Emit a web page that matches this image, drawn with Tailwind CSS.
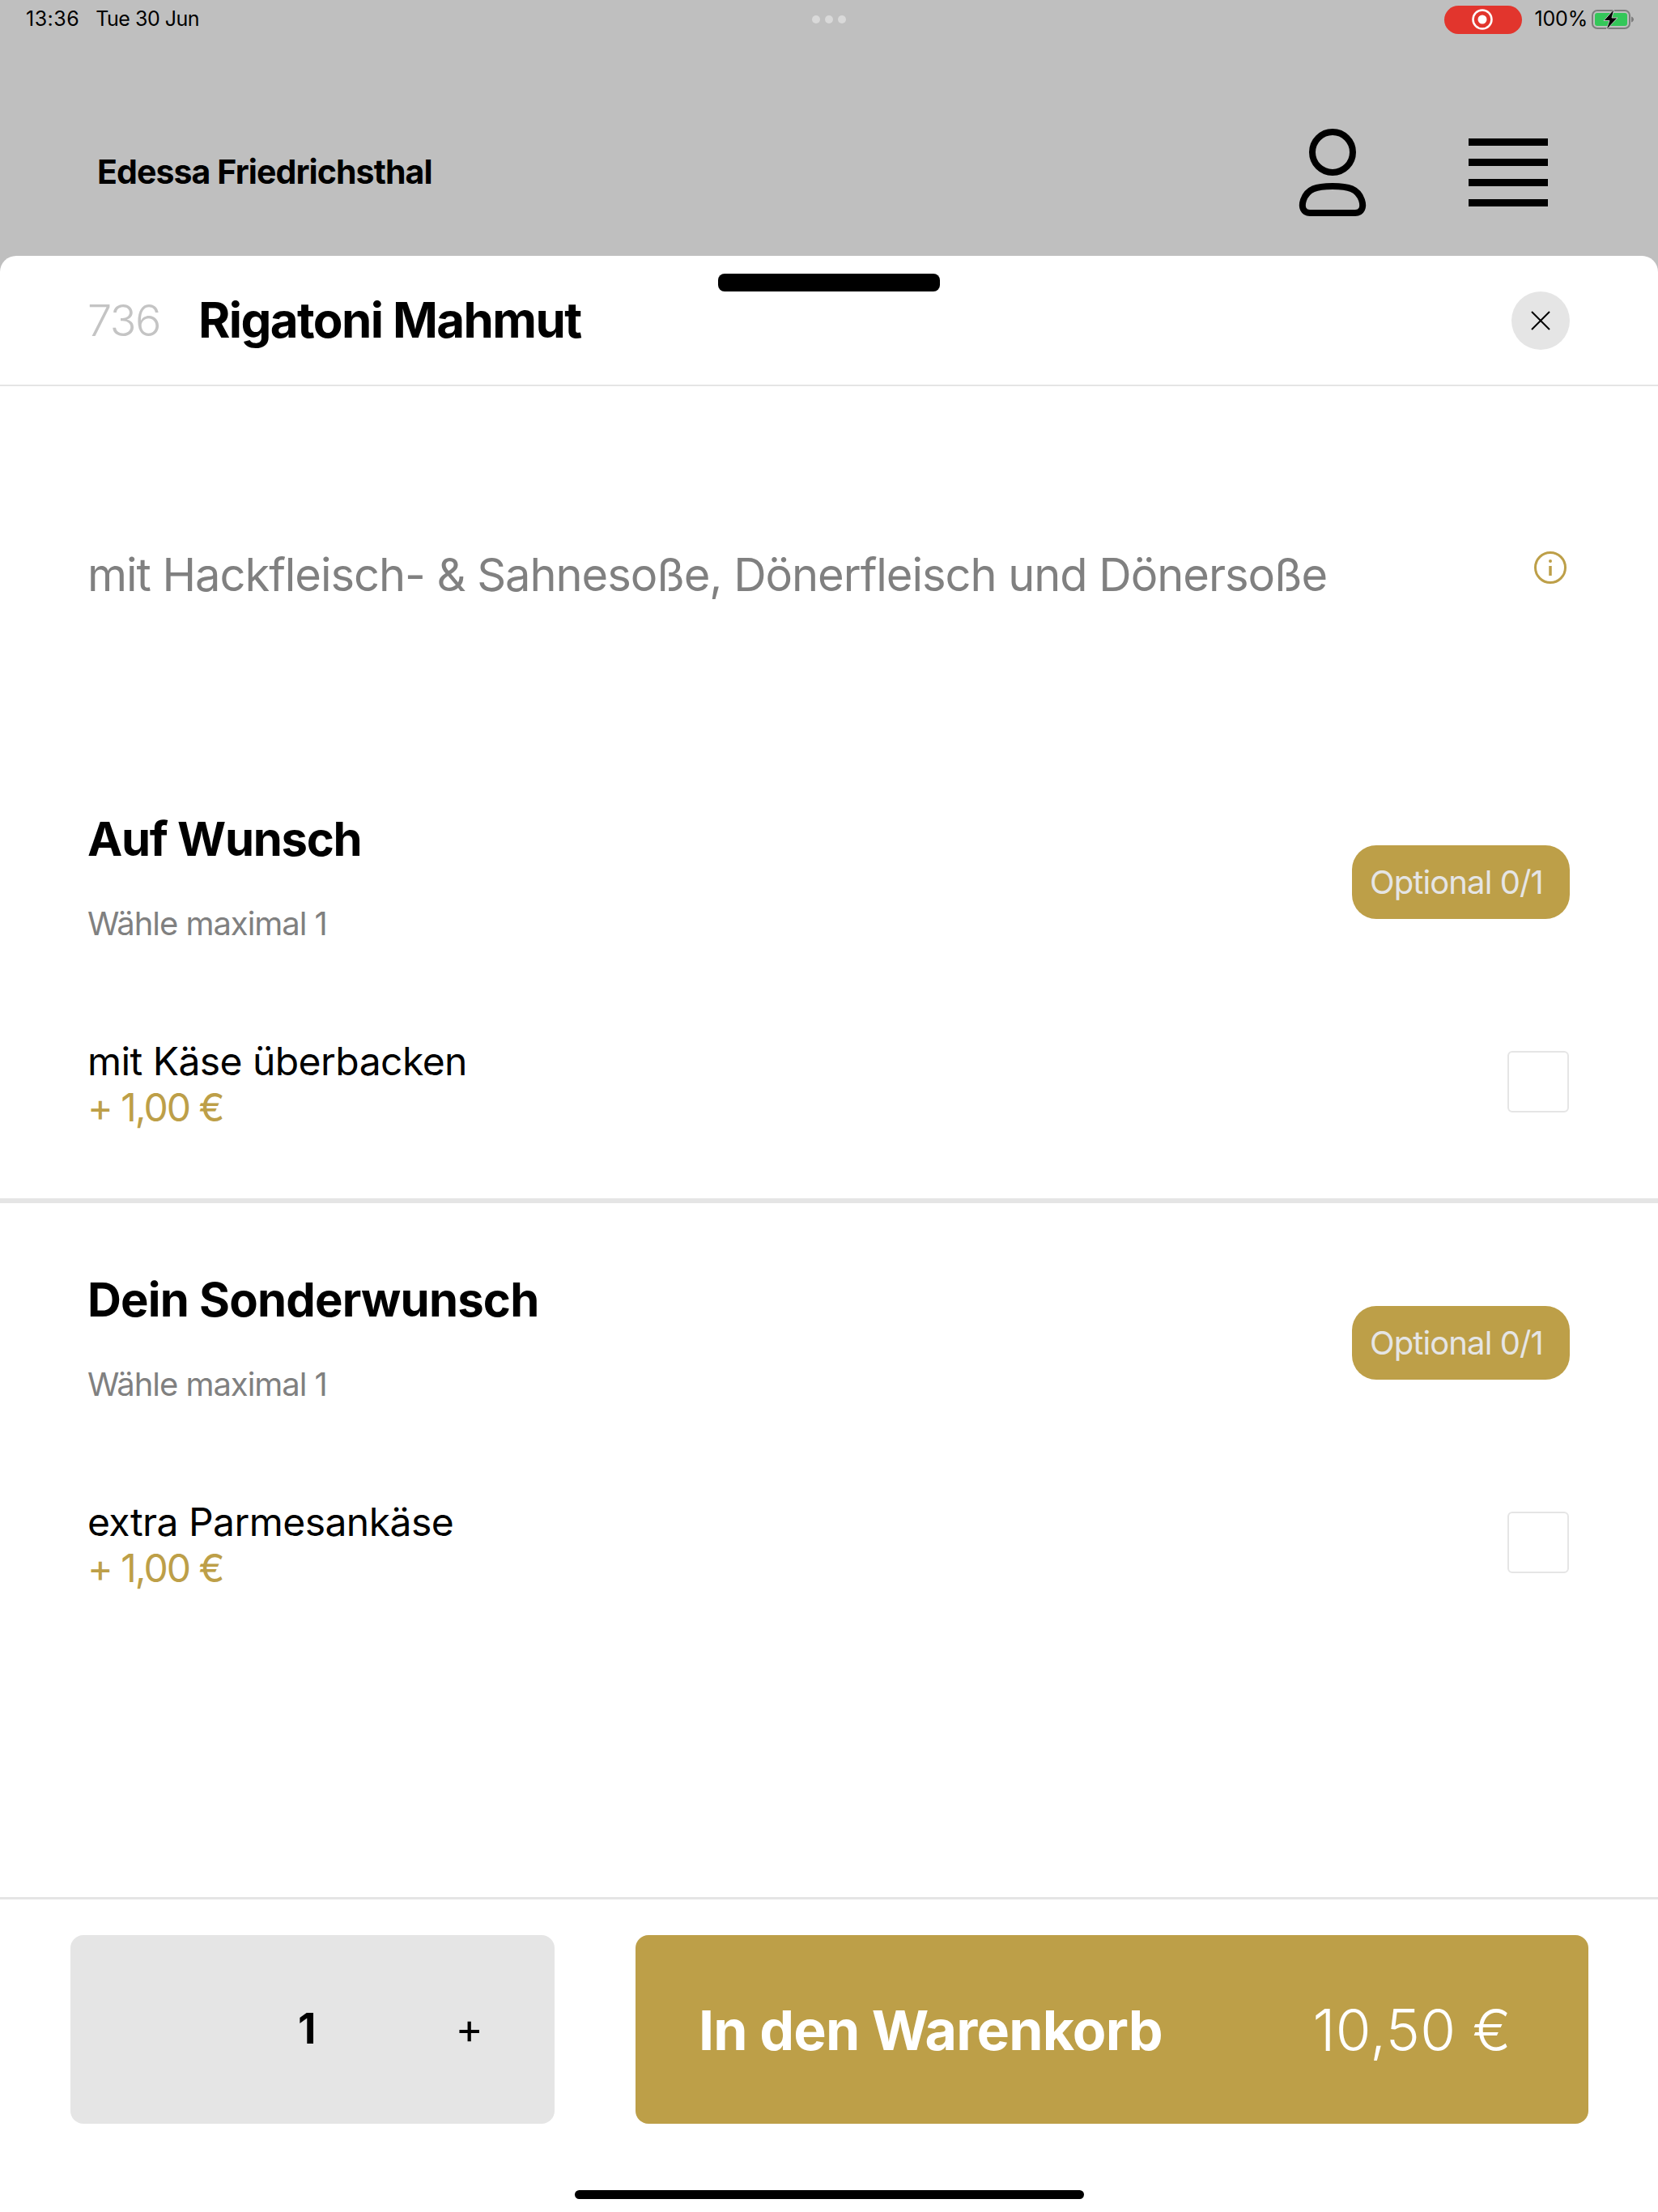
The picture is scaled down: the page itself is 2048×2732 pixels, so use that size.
<!DOCTYPE html>
<html lang="de">
<head>
    <meta charset="UTF-8">
    <meta name="viewport" content="width=device-width, initial-scale=1.0">
    <title>Rigatoni Mahmut</title>
    <script src="https://cdn.jsdelivr.net/npm/@tailwindcss/browser@4"></script>
</head>
<body class="bg-[#bfbfbf] font-['Inter',sans-serif] text-black">
    <div class="relative w-[2048px] h-[2732px] overflow-hidden flex flex-col">

        <!-- status bar -->
        <div class="relative h-[48px] flex items-center justify-between pl-[32px] pr-[30px] text-[25px] tracking-[-0.2px] text-black">
            <div class="flex gap-[20px]">
                <span class="tracking-[0.5px]">13:36</span>
                <span class="tracking-[-0.5px]">Tue 30 Jun</span>
            </div>
            <div class="absolute left-[1003px] top-[19px] flex gap-[6px]">
                <div class="w-[10px] h-[10px] rounded-full bg-[#d9d9d9]"></div>
                <div class="w-[10px] h-[10px] rounded-full bg-[#d9d9d9]"></div>
                <div class="w-[10px] h-[10px] rounded-full bg-[#d9d9d9]"></div>
            </div>
            <div class="flex items-center gap-[16px]">
                <div class="w-[96px] h-[35px] rounded-full bg-[#e2352d] flex items-center justify-center pr-[2px]">
                    <svg width="26" height="26" viewBox="0 0 26 26"><circle cx="13" cy="13" r="11.5" fill="none" stroke="#fff" stroke-width="2.5"/><circle cx="13" cy="13" r="5.5" fill="#fff"/></svg>
                </div>
                <span class="text-[25px]">100%</span>
                <svg class="-ml-[11px]" width="52" height="26" viewBox="0 0 52 26">
                    <rect x="1" y="2" width="46" height="22" rx="6" fill="none" stroke="#7d7d7d" stroke-width="2"/>
                    <rect x="4" y="5" width="40" height="16" rx="3" fill="#34c759"/>
                    <path d="M49 9.5c2 .6 3 2 3 3.5s-1 2.900-3 3.500z" fill="#7d7d7d"/>
                    <path d="M28 0 L15 14.500 H22 L18 26 L32 11 H25 Z" fill="#000" stroke="#bfbfbf" stroke-width="1"/>
                </svg>
            </div>
        </div>

        <!-- top bar -->
        <div class="h-[268px] flex items-center justify-between pl-[120px] pr-[136px] pt-[62px]">
            <h1 class="text-[41px] font-bold tracking-[-0.9px]">Edessa Friedrichsthal</h1>
            <div class="flex items-center gap-[126px]">
                <svg width="84" height="108" viewBox="0 0 84 108" fill="none" stroke="#000" stroke-width="8">
                    <ellipse cx="42" cy="29" rx="25" ry="25"/>
                    <path d="M42 71 C62 71 73 74 78 88 C81 97 78 104 70 104 H14 C6 104 3 97 6 88 C11 74 22 71 42 71 Z"/>
                </svg>
                <div class="flex flex-col gap-[16.500px] w-[98px]">
                    <div class="h-[8.500px] bg-black"></div>
                    <div class="h-[8.500px] bg-black"></div>
                    <div class="h-[8.500px] bg-black"></div>
                    <div class="h-[8.500px] bg-black"></div>
                </div>
            </div>
        </div>

        <!-- sheet -->
        <div class="relative flex-1 flex flex-col bg-white rounded-t-[20px]">
            <div class="absolute left-[887px] top-[22px] w-[274px] h-[22px] rounded-[8px] bg-black"></div>

            <div class="h-[161px] shrink-0 border-b-2 border-[#e5e5e5] flex items-center justify-between pl-[108px] pr-[109px]">
                <div class="flex items-center gap-[47px]">
                    <span class="text-[54px] font-light tracking-[-1.5px] text-[#c4c4c4]">736</span>
                    <h2 class="text-[60px] font-bold tracking-[-1.6px] -mt-[2px]">Rigatoni Mahmut</h2>
                </div>
                <button class="w-[72px] h-[72px] rounded-full bg-[#e5e5e5] flex items-center justify-center">
                    <svg width="24" height="24" viewBox="0 0 24 24" stroke="#000" stroke-width="2"><path d="M1 1 L23 23 M23 1 L1 23"/></svg>
                </button>
            </div>

            <div class="h-[469px] shrink-0 flex items-start justify-between pl-[108px] pr-[113px] pt-[197px]">
                <p class="text-[56px] font-normal text-[#808080] leading-[72px] tracking-[-1.04px]">mit Hackfleisch- &amp; Sahnesoße, Dönerfleisch und Dönersoße</p>
                <svg class="mt-[7px]" width="40" height="40" viewBox="0 0 40 40" fill="none" stroke="#bd9f48"><circle cx="20" cy="20" r="18.500" stroke-width="3"/><path d="M20 18 V30" stroke-width="3.500"/><circle cx="20" cy="12" r="2" fill="#bd9f48" stroke="none"/></svg>
            </div>

            <!-- Auf Wunsch -->
            <section class="h-[540px] shrink-0 border-b-[6px] border-[#e5e5e5] pl-[108px] pr-[109px] pt-[56px]">
                <div class="flex items-center justify-between h-[173px]">
                    <div class="mb-[10px]">
                        <h3 class="text-[58px] font-bold leading-[70px] tracking-[-1.3px]">Auf Wunsch</h3>
                        <p class="mt-[45px] text-[40px] font-normal leading-[50px] tracking-[-1.05px] text-[#808080]">Wähle maximal 1</p>
                    </div>
                    <span class="mt-[1px] pt-[2px] w-[269px] h-[91px] rounded-[30px] bg-[#bd9f48] text-[#e5e5e5] text-[40px] font-normal tracking-[-0.9px] flex items-center pl-[22px]">Optional 0/1</span>
                </div>
                <div class="mt-[107px] flex items-center justify-between">
                    <div class="mb-[2px] text-[48px] font-normal leading-[57px] tracking-[-0.55px]">
                        <p>mit Käse überbacken</p>
                        <p class="text-[#bd9f48] tracking-[-2px]">+ 1,00 €</p>
                    </div>
                    <div class="mb-[8px] mr-[1px] w-[76px] h-[76px] rounded-[6px] border-2 border-[#e5e5e5]"></div>
                </div>
            </section>

            <!-- Dein Sonderwunsch -->
            <section class="flex-1 pl-[108px] pr-[109px] pt-[85px]">
                <div class="flex items-center justify-between h-[173px]">
                    <div class="mb-[10px]">
                        <h3 class="text-[58px] font-bold leading-[70px] tracking-[-0.8px]">Dein Sonderwunsch</h3>
                        <p class="mt-[45px] text-[40px] font-normal leading-[50px] tracking-[-1.05px] text-[#808080]">Wähle maximal 1</p>
                    </div>
                    <span class="mt-[1px] pt-[2px] w-[269px] h-[91px] rounded-[30px] bg-[#bd9f48] text-[#e5e5e5] text-[40px] font-normal tracking-[-0.9px] flex items-center pl-[22px]">Optional 0/1</span>
                </div>
                <div class="mt-[107px] flex items-center justify-between">
                    <div class="mb-[2px] text-[48px] font-normal leading-[57px] tracking-[-0.55px]">
                        <p>extra Parmesankäse</p>
                        <p class="text-[#bd9f48] tracking-[-2px]">+ 1,00 €</p>
                    </div>
                    <div class="mb-[8px] mr-[1px] w-[76px] h-[76px] rounded-[6px] border-2 border-[#e5e5e5]"></div>
                </div>
            </section>

            <!-- footer -->
            <div class="relative h-[389px] shrink-0 border-t-[3px] border-[#e5e5e5] pt-[44px] pl-[87px] pr-[86px] flex items-start gap-[100px]">
                <div class="w-[598px] h-[233px] rounded-[16px] bg-[#e5e5e5] flex items-center">
                    <span class="ml-[281px] -mt-[2px] text-[52px] font-bold">1</span>
                    <span class="ml-[172px] -mt-[2px] text-[52px] font-normal">+</span>
                </div>
                <button class="flex-1 h-[233px] rounded-[16px] bg-[#bd9f48] text-white flex items-center justify-between pl-[78px] pr-[95px]">
                    <span class="text-[68px] font-bold tracking-[-0.8px]">In den Warenkorb</span>
                    <span class="pt-[2px] text-[71px] font-light tracking-[0.4px]">10,50 €</span>
                </button>
                <div class="absolute left-[710px] top-[359px] w-[629px] h-[11px] rounded-full bg-black"></div>
            </div>
        </div>
    </div>
</body>
</html>
